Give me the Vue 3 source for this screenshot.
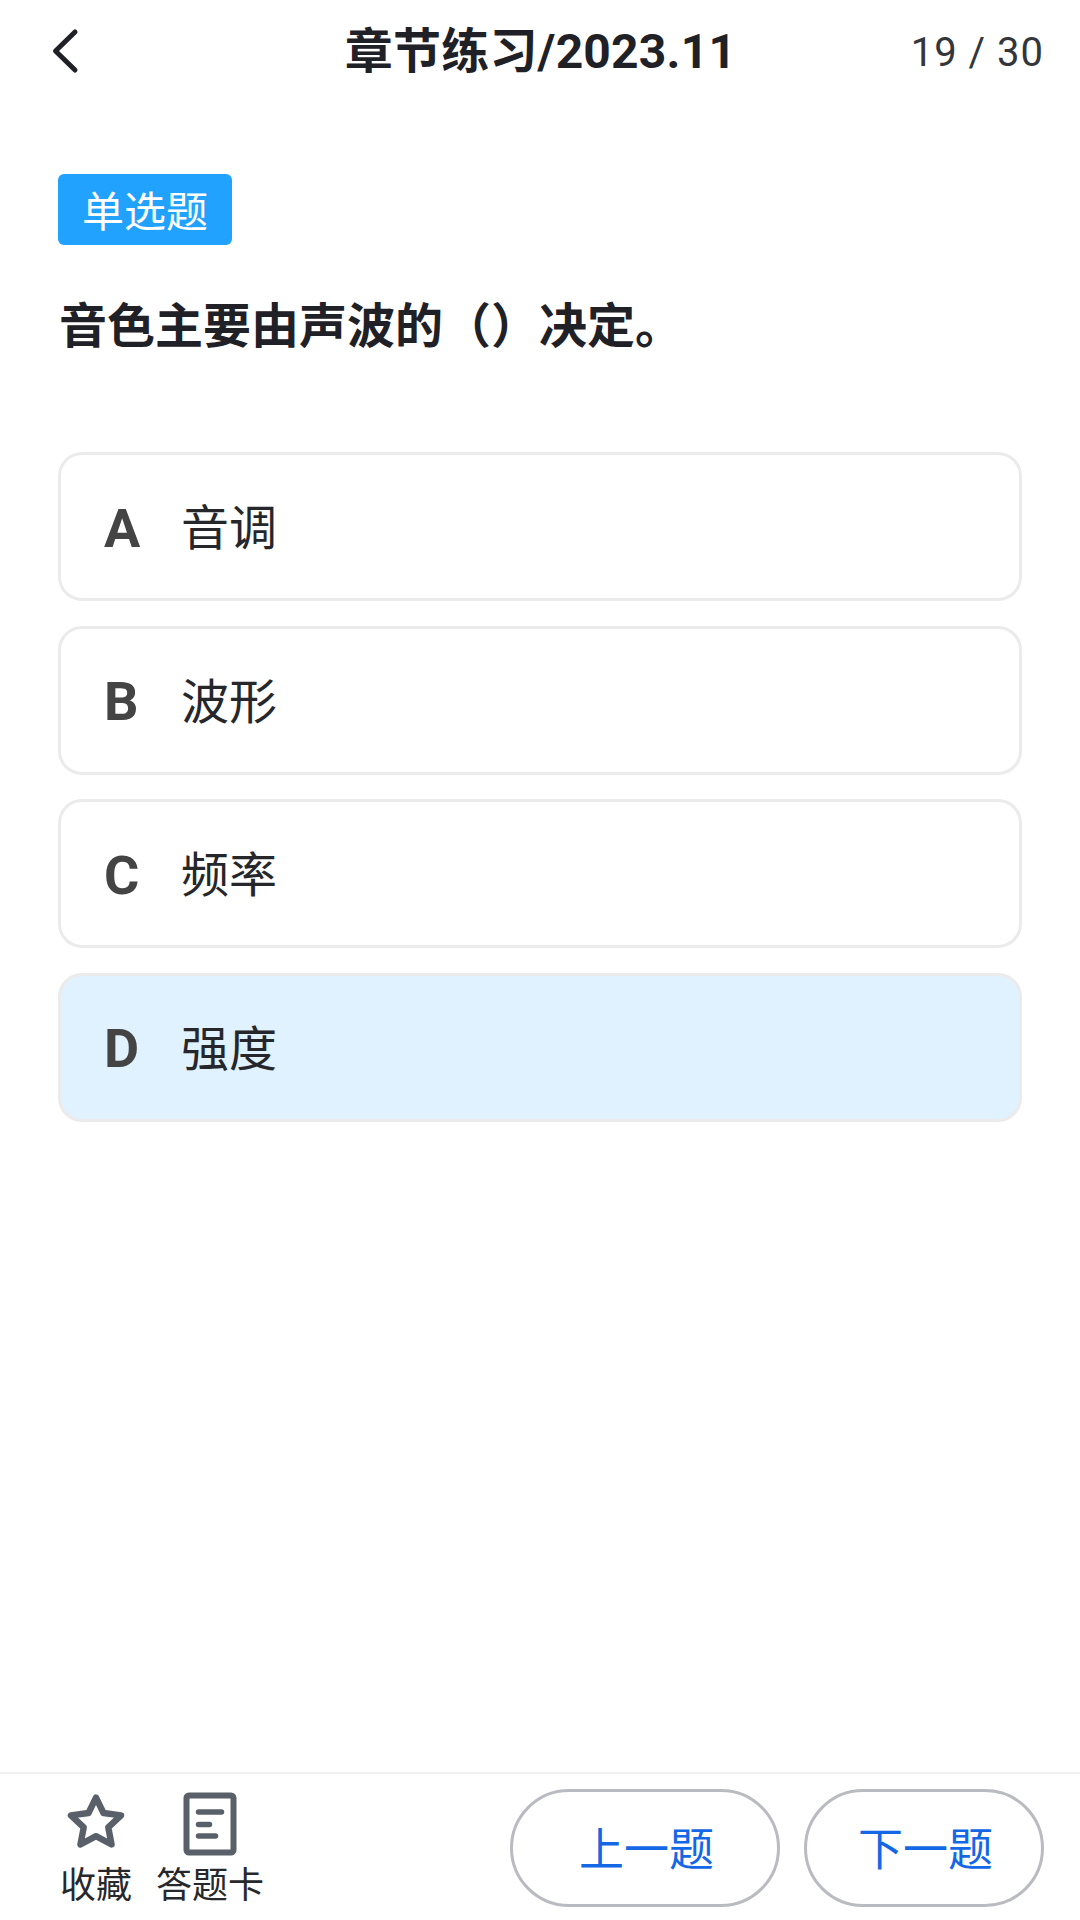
<template>
  <div class="page">
    <header class="topbar">
      <svg class="back" viewBox="0 0 32 52" width="32" height="52">
        <path d="M27 7 L7.500 26 L27 45" fill="none" stroke="#1f2126" stroke-width="5" stroke-linecap="round" stroke-linejoin="round" />
      </svg>
      <div class="title">章节练习/2023.11</div>
      <div class="count">19 / 30</div>
    </header>

    <main class="content">
      <div class="tag">单选题</div>
      <h1 class="question">音色主要由声波的（）决定。</h1>
      <div class="options">
        <div v-for="opt in options" :key="opt.key" :class="['option', opt.key === selected && 'selected']">
          <span class="letter">{{ opt.key }}</span>
          <span class="label">{{ opt.text }}</span>
        </div>
      </div>
    </main>

    <footer class="bottombar">
      <div class="tools">
        <div class="tool">
          <svg viewBox="0 0 60 63.75" width="64" height="68">
            <path d="M30 8 L37 22.500 L53.500 24.700 L41.500 36 L44.600 52 L30 44.200 L15.400 52 L18.500 36 L6.500 24.700 L23 22.500 Z" fill="none" stroke="#596069" stroke-width="6" stroke-linejoin="round" />
          </svg>
          <span>收藏</span>
        </div>
        <div class="tool">
          <svg viewBox="0 0 60 68" width="60" height="68">
            <rect x="6.500" y="6.500" width="47" height="57" rx="2.500" fill="none" stroke="#596069" stroke-width="6" />
            <path d="M18.500 23 H41.500 M18.500 35.500 H29.500 M18.500 47 H35.500" fill="none" stroke="#596069" stroke-width="5.500" stroke-linecap="round" />
          </svg>
          <span>答题卡</span>
        </div>
      </div>
      <div class="nav">
        <button class="btn prev">上一题</button>
        <button class="btn next">下一题</button>
      </div>
    </footer>
  </div>
</template>

<script setup>
const selected = 'D'
const options = [
  { key: 'A', text: '音调' },
  { key: 'B', text: '波形' },
  { key: 'C', text: '频率' },
  { key: 'D', text: '强度' },
]
</script>

<style>
html, body {
  margin: 0;
  background: #fff;
}
</style>

<style scoped>
.page {
  width: 1080px;
  height: 1920px;
  display: flex;
  flex-direction: column;
  background: #fff;
  font-family: Roboto, "Noto Sans CJK SC", sans-serif;
  color: #1f2126;
}

.topbar {
  height: 104px;
  flex: none;
  display: grid;
  grid-template-columns: 1fr auto 1fr;
  align-items: center;
  padding: 0 36px 0 37px;
}
.back {
  display: block;
  margin: 0 0 3px 11px;
}
.title {
  font-size: 48px;
  font-weight: 700;
  line-height: 1;
  letter-spacing: 0.2px;
}
.count {
  justify-self: end;
  margin-top: 2px;
  font-size: 40px;
  letter-spacing: 1px;
  color: #33363b;
  line-height: 1;
}

.content {
  flex: 1;
  padding: 70px 58px 0 58px;
}
.tag {
  width: 174px;
  height: 71px;
  padding-bottom: 2px;
  box-sizing: border-box;
  display: flex;
  align-items: center;
  justify-content: center;
  background: #22a2ff;
  border-radius: 6px;
  color: #fff;
  font-size: 42px;
}
.question {
  margin: 48px 0 0 1px;
  font-size: 48px;
  font-weight: 700;
  line-height: 68px;
}
.options {
  margin-top: 91px;
  display: flex;
  flex-direction: column;
  gap: 24.5px;
}
.option {
  box-sizing: border-box;
  height: 149px;
  display: flex;
  align-items: center;
  border: 3px solid #ebebeb;
  border-radius: 24px;
  background: #fff;
}
.option.selected {
  background: #e0f1ff;
}
.letter {
  width: 120px;
  padding-left: 43px;
  margin-top: 3px;
  box-sizing: border-box;
  font-size: 54px;
  font-weight: 700;
  color: #444;
}
.label {
  margin-bottom: 5px;
  font-size: 48px;
  color: #25272b;
}

.bottombar {
  flex: none;
  height: 148px;
  box-sizing: border-box;
  border-top: 2px solid #f0f1f3;
  display: flex;
  justify-content: space-between;
  padding: 15px 36px 0 60px;
}
.tools {
  display: flex;
  gap: 24px;
}
.tool {
  display: flex;
  flex-direction: column;
  align-items: center;
  font-size: 36px;
  line-height: 44px;
  color: #26282c;
}
.tool svg {
  display: block;
}
.tool span {
  margin-top: 7px;
}
.nav {
  display: flex;
  gap: 24px;
}
.btn {
  height: 118px;
  border: 3px solid #b9bbc0;
  border-radius: 59px;
  background: #fff;
  color: #1468e6;
  font-family: inherit;
  font-size: 45px;
  padding: 0 0 3px 3px;
}
.prev {
  width: 270px;
}
.next {
  width: 240px;
}
</style>
